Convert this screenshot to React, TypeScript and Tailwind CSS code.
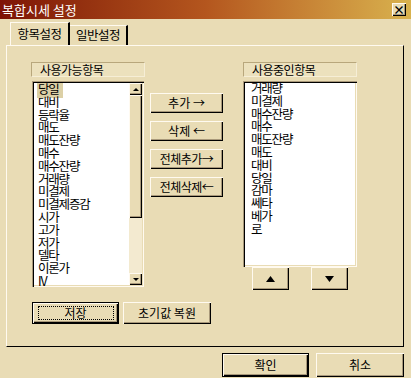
import React from 'react'

const font = { fontFamily: '"Noto Sans CJK KR", "Noto Sans", sans-serif' }

const raised =
  'bg-[#e9dcb5] shadow-[inset_1px_1px_0_#fffaf0,inset_-1px_-1px_0_#000,inset_-2px_-2px_0_#a8987a]'
const sunken =
  'shadow-[inset_1px_1px_0_#a8987a,inset_2px_2px_0_#000,inset_-1px_-1px_0_#fffaf0,inset_-2px_-2px_0_#e9dcb5]'

const available = [
  '당일', '대비', '등락율', '매도', '매도잔량', '매수', '매수잔량', '거래량',
  '미결제', '미결제증감', '시가', '고가', '저가', '델타', '이론가', 'IV',
]
const inUse = [
  '거래량', '미결제', '매수잔량', '매수', '매도잔량', '매도', '대비', '당일',
  '감마', '쎄타', '베가', '로',
]

function Tri({ up, w, h }: { up?: boolean; w: number; h: number }) {
  return (
    <svg width={w} height={h} viewBox={`0 0 ${w} ${h}`}>
      <polygon points={up ? `0,${h} ${w},${h} ${w / 2},0` : `0,0 ${w},0 ${w / 2},${h}`} fill="#000" />
    </svg>
  )
}

function Btn({ children, className = '' }: { children: React.ReactNode; className?: string }) {
  return (
    <div className={`flex items-center justify-center text-[12px] text-black ${raised} ${className}`}>
      {children}
    </div>
  )
}

function GroupLabel({ text, className = '' }: { text: string; className?: string }) {
  return (
    <div
      className={`flex h-[15px] items-center border border-t-[#b8a77c] border-l-[#b8a77c] border-r-[#f6eed6] border-b-[#f6eed6] bg-[#ece1bd] pl-[8px] text-[12px] tracking-[-0.5px] text-black ${className}`}
    >
      {text}
    </div>
  )
}

function Item({ text, selected }: { text: string; selected?: boolean }) {
  return (
    <div className="h-[12.8px] text-[12.5px] leading-[12.8px] tracking-[-1.2px] text-black">
      <span className={selected ? 'bg-[#dcd0a6] pl-[1px] pr-[4px]' : 'pl-[1px]'}>{text}</span>
    </div>
  )
}

export default function App() {
  return (
    <div style={font} className="flex h-[378px] w-[411px] flex-col overflow-hidden bg-[#e9dcb5]">
      {/* Title bar */}
      <div className="flex h-[19px] items-center justify-between bg-gradient-to-r from-[#7e1206] via-[#b4561e] to-[#d8b24e] pl-[2px] pr-[5px]">
        <span className="text-[13px] leading-none text-white">복합시세 설정</span>
        <div className={`flex h-[13px] w-[14px] items-center justify-center text-[12px] font-bold leading-none ${raised}`}>
          ×
        </div>
      </div>

      {/* Tabs */}
      <div className="mt-[3px] flex h-[23px] items-end pl-[10px]">
        <div className="flex h-[23px] w-[60px] items-center justify-center border-t border-l border-t-[#fffaf0] border-l-[#fffaf0] border-r-2 border-r-[#000] text-[12.5px] tracking-[-0.5px]">
          항목설정
        </div>
        <div className="flex h-[20px] w-[58px] items-center justify-center border-t border-t-[#fffaf0] border-r-2 border-r-[#000] text-[12.5px] tracking-[-0.5px]">
          일반설정
        </div>
      </div>

      {/* Panel */}
      <div className="ml-[6px] flex h-[302px] w-[398px] flex-col border-l border-t border-l-[#fffaf0] border-t-[#fffaf0] border-r border-b border-r-[#000] border-b-[#000] pl-[24px] pt-[16px]">
        <div className="flex">
          {/* Left column */}
          <div className="flex w-[114px] flex-col">
            <GroupLabel text="사용가능항목" />
            <div className={`ml-[1px] mt-[4px] flex h-[206px] w-[112px] bg-white pl-[2px] pt-[2px] ${sunken}`}>
              <div className="flex-1 overflow-hidden pl-[3px]">
                {available.map((t, i) => (
                  <Item key={t} text={t} selected={i === 0} />
                ))}
              </div>
              <div className="mr-[2px] mb-[2px] flex w-[13px] flex-col bg-[#f3ead0]">
                <div className={`flex h-[12px] items-center justify-center ${raised}`}>
                  <Tri up w={6} h={3} />
                </div>
                <div className={`h-[123px] ${raised}`} />
                <div className="flex-1" />
                <div className={`flex h-[12px] items-center justify-center ${raised}`}>
                  <Tri w={6} h={3} />
                </div>
              </div>
            </div>
          </div>

          {/* Middle buttons */}
          <div className="ml-[5px] flex flex-col gap-[8px] pt-[31px]">
            <Btn className="h-[20px] w-[73px]">추가 →</Btn>
            <Btn className="h-[20px] w-[73px]">삭제 ←</Btn>
            <Btn className="h-[20px] w-[73px] tracking-[-0.5px]">전체추가→</Btn>
            <Btn className="h-[20px] w-[73px] tracking-[-0.5px]">전체삭제←</Btn>
          </div>

          {/* Right column */}
          <div className="ml-[20px] flex w-[114px] flex-col">
            <GroupLabel text="사용중인항목" />
            <div className={`mt-[4px] h-[186px] w-[114px] bg-white pl-[7px] pt-[1px] ${sunken}`}>
              {inUse.map((t) => (
                <Item key={t} text={t} />
              ))}
            </div>
            <div className="flex gap-[22px] pl-[9px]">
              <Btn className="h-[23px] w-[37px]">
                <Tri up w={9} h={6} />
              </Btn>
              <Btn className="h-[23px] w-[37px]">
                <Tri w={9} h={6} />
              </Btn>
            </div>
          </div>
        </div>

        {/* Save row */}
        <div className="ml-[1px] mt-[12px] flex gap-[4px]">
          <div className="h-[22px] w-[87px] border border-black">
            <Btn className="h-full w-full">
              <div className="flex h-[14px] w-[76px] items-center justify-center border border-dotted border-black">
                저장
              </div>
            </Btn>
          </div>
          <Btn className="h-[22px] w-[88px]">초기값 복원</Btn>
        </div>
      </div>

      {/* Bottom buttons */}
      <div className="mt-[6px] flex gap-[7px] pl-[222px]">
        <div className="h-[24px] w-[87px] border border-black">
          <Btn className="h-full w-full">확인</Btn>
        </div>
        <Btn className="h-[24px] w-[88px]">취소</Btn>
      </div>
    </div>
  )
}
